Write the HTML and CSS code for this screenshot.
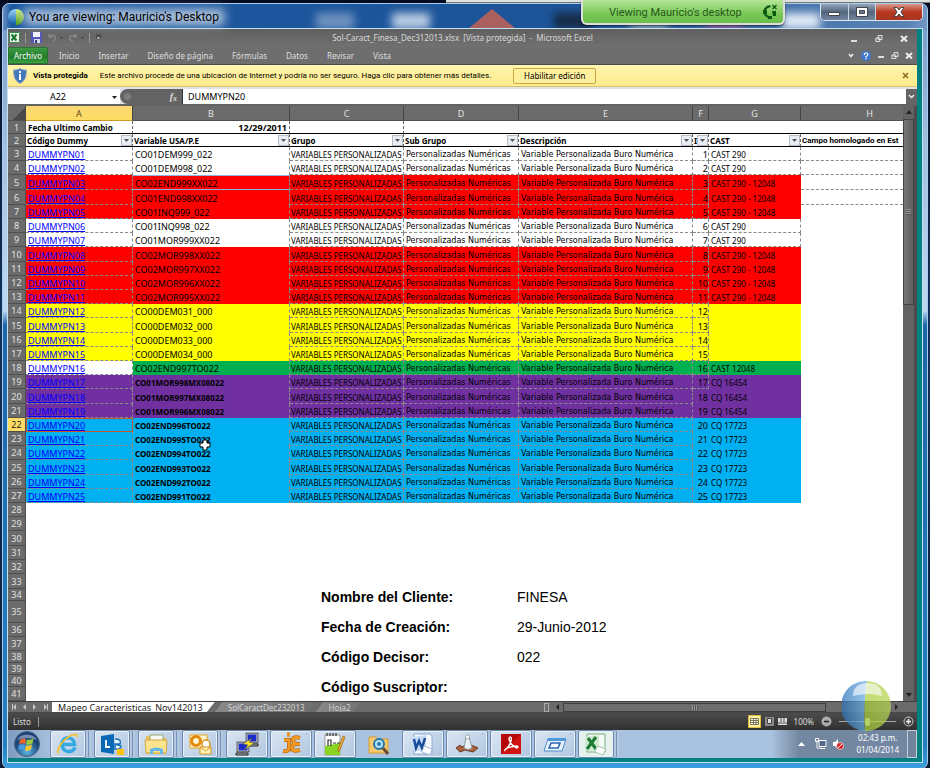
FILE: index.html
```html
<!DOCTYPE html>
<html lang="es">
<head>
<meta charset="utf-8">
<title>Mauricio's Desktop</title>
<link rel="stylesheet" href="styles.css">
</head>
<body>
<div class="meeting">
  <div class="meeting-edge"></div>
  <div class="meeting-pill">
    <span>Viewing Mauricio's desktop</span>
    <svg width="18" height="16" viewBox="0 0 18 16"><path d="M9.500 2.500A5.200 5.200 0 1 0 8 13" fill="none" stroke="#0b5c12" stroke-width="2.200"/><path d="M2 6h4v4H2zM7 12h4v3H7zM11 7h4v5h-3z" fill="#0b5c12"/><path d="M11.500 1l4 4m0-4l-4 4" stroke="#0b5c12" stroke-width="1.300"/></svg>
  </div>
</div>

<div class="viewer">
  <header class="viewer-bar">
    <svg class="viewer-logo" width="16" height="16" viewBox="0 0 16 16"><defs><linearGradient id="blue" x2="0" y2="1"><stop stop-color="#9fd4f5"/><stop offset="1" stop-color="#0a5aa8"/></linearGradient><linearGradient id="green" x2="0" y2="1"><stop stop-color="#d2ee7c"/><stop offset="1" stop-color="#4f9a10"/></linearGradient></defs><path d="M8 0a8 8 0 0 0 0 16z" fill="url(#blue)"/><path d="M8 0a8 8 0 0 1 0 16z" fill="url(#green)"/></svg>
    <h1>You are viewing: Mauricio's Desktop</h1>
    <div class="blurred" aria-hidden="true"><i class="b1"></i><i class="b2"></i><i class="b3"></i><i class="b4"></i><i class="b5"></i><i class="b6"></i><i class="b7"></i></div>
    <div class="caption-buttons">
      <button aria-label="Minimize"><svg width="12" height="10" viewBox="0 0 12 10"><path d="M.5 5.500h11v3H.5z" fill="#fff" stroke="#444"/></svg></button>
      <button aria-label="Maximize"><svg width="12" height="10" viewBox="0 0 12 10"><path d="M.5.5h11v9H.5z" fill="#fff" stroke="#444"/><path d="M3.500 3.500h5v3h-5z" fill="#6d7c90" stroke="#444"/></svg></button>
      <button class="close" aria-label="Close"><svg width="12" height="10" viewBox="0 0 12 10"><path d="M1 .5h3l2 2.500 2-2.500h3L8 5l3 4.500H8L6 7 4 9.500H1L4 5z" fill="#fff" stroke="#444"/></svg></button>
    </div>
  </header>

  <main class="desktop">
    <section class="excel">
      <div class="excel-title">
        <div class="qat">
          <svg width="11" height="11" viewBox="0 0 11 11"><path d="M0 0h11v11H0z" fill="#e9f3ea"/><path d="M.5.5h10v10H.5z" fill="none" stroke="#3b8b47"/><path d="M2.500 2.500l5 6m0-6l-5 6" stroke="#16762b" stroke-width="2"/></svg>
          <i class="sep"></i>
          <svg width="11" height="11" viewBox="0 0 11 11"><path d="M0 0h11v11H0z" fill="#5357b8"/><path d="M2 0h7v5H2z" fill="#f2f4ff"/><path d="M3 7h6v4H3z" fill="#d5d8ef"/><path d="M4 8h2v3H4z" fill="#333a88"/></svg>
          <svg width="16" height="10" viewBox="0 0 16 10"><path d="M2 1v3h3M2 4c2-3 7-2 6 2L6 9" fill="none" stroke="#858585" stroke-width="1.500"/><path d="M13 4h3l-1.500 2z" fill="#444"/></svg>
          <svg width="16" height="10" viewBox="0 0 16 10"><path d="M8 1v3H5M8 4C6 1 1 2 2 6l3 3" fill="none" stroke="#858585" stroke-width="1.500"/><path d="M13 4h3l-1.500 2z" fill="#444"/></svg>
          <i class="sep"></i>
          <svg width="7" height="7" viewBox="0 0 7 7"><path d="M1 1h5M1 3h5L3.500 6z" fill="#ddd" stroke="#222" stroke-width=".7"/></svg>
        </div>
        <span class="doc-name">Sol-Caract_Finesa_Dec312013.xlsx&nbsp; [Vista protegida]&nbsp; - &nbsp;Microsoft Excel</span>
        <div class="win-icons outer">
          <svg width="8" height="9"><path d="M1 6h6v2H1z" fill="#ddd"/></svg>
          <svg width="8" height="9"><path d="M3 1.500h4v4H3zM.8 4h4v3.500h-4z" fill="#777" stroke="#ddd"/></svg>
          <svg width="8" height="9"><path d="M1 2l6 5.500M7 2L1 7.500" stroke="#eee" stroke-width="2"/></svg>
        </div>
      </div>
      <nav class="ribbon">
        <button class="file">Archivo</button>
        <button>Inicio</button><button>Insertar</button><button>Diseño de página</button><button>Fórmulas</button><button>Datos</button><button>Revisar</button><button>Vista</button>
        <div class="win-icons">
          <svg width="8" height="9"><path d="M2 3l2 2.500L6 3" fill="none" stroke="#eee" stroke-width="1.500"/></svg>
          <svg width="10" height="10"><circle cx="5" cy="5" r="5" fill="#3f78cf"/><path d="M3.300 4q0-2 1.800-2t1.700 1.500T5 5.500v1M5 7v1.300" fill="none" stroke="#fff" stroke-width="1.200"/></svg>
          <svg width="8" height="9"><path d="M1 5h6v2H1z" fill="#ddd"/></svg>
          <svg width="8" height="9"><path d="M3 1.500h4v4H3zM.8 4h4v3.500h-4z" fill="#777" stroke="#ddd"/></svg>
          <svg width="8" height="9"><path d="M1 2l6 5.500M7 2L1 7.500" stroke="#eee" stroke-width="2"/></svg>
        </div>
      </nav>
      <div class="protected">
        <svg width="14" height="16" viewBox="0 0 14 16"><path d="M7 .5C5 2 3 2 .7 2 .5 9 2 13 7 15.500 12 13 13.500 9 13.300 2 11 2 9 2 7 .5z" fill="#4478b8" stroke="#8ea9c9"/><path d="M6 6h2v6H6zM6 3h2v2H6z" fill="#fff"/></svg>
        <strong>Vista protegida</strong>
        <span class="warning">Este archivo procede de una ubicación de Internet y podría no ser seguro. Haga clic para obtener más detalles.</span>
        <button class="enable">Habilitar edición</button>
        <button class="dismiss" aria-label="Cerrar"><svg width="7" height="7"><path d="M1 1l5 5M6 1L1 6" stroke="#8a6f20" stroke-width="1.600"/></svg></button>
      </div>
      <div class="formula-bar">
        <select class="name-box" aria-label="Cuadro de nombres"><option>A22</option></select>
        <svg class="name-arrow" width="7" height="5"><path d="M1 1h5L3.500 4z" fill="#222"/></svg>
        <div class="fx"><i></i><em>f<sub>x</sub></em></div>
        <input class="formula" aria-label="Barra de fórmulas" value="DUMMYPN20">
        <button class="expand" aria-label="Expandir"><svg width="7" height="5"><path d="M1 1l2.500 2.500L6 1" fill="none" stroke="#eee" stroke-width="1.500"/></svg></button>
      </div>
      <div class="workbook">
        <div class="sheet">
          <table class="cells">
            <colgroup><col class="c-n"><col class="c-a"><col class="c-b"><col class="c-c"><col class="c-d"><col class="c-e"><col class="c-f"><col class="c-g"><col></colgroup>
            <thead><tr><th class="corner"></th><th class="current">A</th><th>B</th><th>C</th><th>D</th><th>E</th><th>F</th><th>G</th><th class="h-col">H</th></tr></thead>
            <tbody id="rows"></tbody>
          </table>
          <dl class="details">
            <dt>Nombre del Cliente:</dt><dd>FINESA</dd>
            <dt>Fecha de Creación:</dt><dd>29-Junio-2012</dd>
            <dt>Código Decisor:</dt><dd>022</dd>
            <dt>Código Suscriptor:</dt><dd></dd>
          </dl>
          <svg class="pointer" width="12" height="12" viewBox="0 0 12 12"><path d="M4 1h4v3h3v4H8v3H4V8H1V4h3z" fill="#fff" stroke="#000"/></svg>
        </div>
        <div class="v-scroll">
          <svg width="8" height="7"><path d="M4 2l3 4H1z" fill="#222"/></svg>
          <div class="v-thumb"><i></i></div>
          <svg class="down" width="8" height="7"><path d="M4 5l3-4H1z" fill="#222"/></svg>
        </div>
      </div>
      <div class="sheet-tabs">
        <svg class="tab-nav" width="44" height="11" viewBox="0 0 44 11"><path d="M8 2v6L5 5zM18 2v6l-3-3zM25 2v6l3-3zM36 2v6l3-3zM4 2h1v6H4zM39 2h1v6h-1z" fill="#c6c6c6"/></svg>
        <button class="active">Mapeo Caracteristicas_Nov142013</button>
        <button>SolCaractDec232013</button>
        <button>Hoja2</button>
        <div class="h-scroll">
          <i class="split"></i>
          <svg width="7" height="8"><path d="M5 1v6L2 4z" fill="#222"/></svg>
          <div class="h-thumb"><i></i></div>
          <svg class="right" width="7" height="8"><path d="M2 1v6l3-3z" fill="#222"/></svg>
        </div>
      </div>
      <footer class="status">
        <span>Listo</span><i class="sep"></i>
        <div class="views">
          <svg width="13" height="13"><path d="M.5.5h12v12H.5z" fill="#fff3a8" stroke="#e3bd3b"/><path d="M2.500 3.500h8v6h-8zM2.500 5.500h8M2.500 7.500h8M5.500 3.500v6M8 3.500v6" fill="#fff" stroke="#665b30" stroke-width=".8"/></svg>
          <svg width="9" height="9"><path d="M0 0h9v9H0z" fill="#8a8a8a"/><path d="M2.500 1.500h4v5h-4z" fill="#ddd" stroke="#444"/></svg>
          <svg width="9" height="9"><path d="M0 1h9v7H0z" fill="#ddd"/><path d="M3 1v4M6 1v4M0 6h9" stroke="#555"/></svg>
        </div>
        <span class="percent">100%</span>
        <svg width="11" height="11"><circle cx="5.500" cy="5.500" r="5" fill="#aaa"/><path d="M3 5.500h5" stroke="#222" stroke-width="1.500"/></svg>
        <input class="zoom" type="range" aria-label="Zoom">
        <svg width="11" height="11"><circle cx="5.500" cy="5.500" r="4.500" fill="#444" stroke="#ccc"/><path d="M3 5.500h5M5.500 3v5" stroke="#eee" stroke-width="1.500"/></svg>
      </footer>
    </section>

    <footer class="taskbar">
      <button class="start" aria-label="Inicio"><svg width="26" height="26" viewBox="0 0 26 26"><defs><radialGradient id="orb" cy=".8"><stop stop-color="#5bb8e8"/><stop offset="1" stop-color="#1b4578"/></radialGradient></defs><circle cx="13" cy="13" r="12.500" fill="url(#orb)" stroke="#46617f"/><path d="M6 9q3-2.500 6-1l-1 5q-3-1.500-6 0z" fill="#f0642c"/><path d="M13 8.500q3 1 6.500-1l-1 5q-3 2-6.500 1z" fill="#9ac93b"/><path d="M5 14q3-1.500 6 0l-1 5q-3-1.500-5.500.500z" fill="#4b9be0"/><path d="M12 14.500q3 1 6-1l-1 5q-3 2-6 1z" fill="#fbc72e"/><path d="M3 9a11 9 0 0 1 20 0Q13 5 3 9z" fill="#fff" opacity=".4"/></svg></button>
      <button class="app stacked" aria-label="Internet Explorer"><svg width="26" height="24" viewBox="0 0 26 24"><path d="M20 15.500c-3 6.500-13 5-13-3.500S19 4 19.500 12.500H8" fill="none" stroke="#35a9e1" stroke-width="3.500"/><path d="M4 21C0 20 7 7 17 3q6-2 5 2" fill="none" stroke="#f3c22b" stroke-width="1.800"/></svg></button>
      <button class="app stacked" aria-label="Lync"><svg width="26" height="24" viewBox="0 0 26 24"><path d="M2 4l13-2v20L2 20z" fill="#0a68b5"/><path d="M7 8v7h4" fill="none" stroke="#fff" stroke-width="1.800"/><path d="M16 7q7 0 5 5h-5M16 17v-5l6 2q0 4-6 3z" fill="#eef7fd" stroke="#1571bd" stroke-width="1.500"/><path d="M18 17h7v6h-7z" fill="#ffc20e"/></svg></button>
      <button class="app stacked" aria-label="Explorador"><svg width="26" height="24" viewBox="0 0 26 24"><path d="M3 4h8l2 2h10v16H3z" fill="#e9bf5a"/><path d="M7 3h13v6H7z" fill="#f7faf3" stroke="#9aa86b"/><path d="M2 8h22l-1 13H3z" fill="#fbe28d" stroke="#d3a84a"/><path d="M7 22v-5q6-3 13 0v5h-3v-3h-7v3z" fill="#65b7e6"/></svg></button>
      <button class="app stacked" aria-label="Outlook"><svg width="26" height="24" viewBox="0 0 26 24"><path d="M3 3h17v13H3z" fill="#fff4d4" stroke="#e6a51b"/><circle cx="9" cy="9" r="4.500" fill="none" stroke="#e38a0c" stroke-width="3"/><circle cx="19" cy="12" r="4" fill="#fff" stroke="#d8941c" stroke-width="1.500"/><path d="M13 15h11v7H13z" fill="#fff3bc" stroke="#d8941c"/><path d="M13 15l5.500 4 5.500-4" fill="none" stroke="#d8941c"/></svg></button>
      <button class="app" aria-label="PuTTY"><svg width="26" height="24" viewBox="0 0 26 24"><path d="M13 2h10v8H13zM4 11h10v8H4z" fill="#1b2bc8" stroke="#222" stroke-width="2.600"/><path d="M13 2h10v8H13zM4 11h10v8H4z" fill="#1b2bc8" stroke="#ccc" stroke-width="1.200"/><path d="M15 12h9v2h-9zM2 21h12v2H2z" fill="#bbb" stroke="#222"/><path d="M18 6l-9 6 5 1-4 5 10-7-5-1z" fill="#ffe91f" stroke="#555" stroke-width=".6"/></svg></button>
      <button class="app" aria-label="jEdit"><svg width="26" height="24" viewBox="0 0 26 24"><path d="M6 8h5v8q0 4-6 3M9 2.500h3M22 6q-7-2-7 2 0 3 4 4-5 0-5 4 0 4 8 2M15 12h7" fill="none" stroke="#b96b17" stroke-width="4"/><path d="M6 8h5v8q0 4-6 3M9 2.500h3M22 6q-7-2-7 2 0 3 4 4-5 0-5 4 0 4 8 2M15 12h7" fill="none" stroke="#f59a22" stroke-width="2.600"/></svg></button>
      <button class="app" aria-label="Notepad++"><svg width="26" height="24" viewBox="0 0 26 24"><path d="M3 3h15v20H3z" fill="#fff" stroke="#999"/><path d="M3 14l15-3v12H3z" fill="#8bd321"/><path d="M5 1v3M8 1v3M11 1v3M14 1v3M6 14V8h3v6M11 11h3M15 11h3" stroke="#333" fill="none" stroke-width="1.200"/><path d="M21 4l2 1-5 13-2 2v-3z" fill="#f7a928" stroke="#8d651e" stroke-width=".7"/></svg></button>
      <button class="app plain" aria-label="Buscar"><svg width="26" height="24" viewBox="0 0 26 24"><path d="M3 5h7l2 2h10v14H3z" fill="#f6c96c" stroke="#d89c36"/><circle cx="13" cy="12" r="5" fill="#b9e3f7" stroke="#2679ad" stroke-width="2"/><circle cx="13" cy="12" r="2" fill="#2679ad"/><path d="M17 16l5 6" stroke="#694b35" stroke-width="3"/></svg></button>
      <button class="app" aria-label="Word"><svg width="26" height="24" viewBox="0 0 26 24"><path d="M4 2h16l2 2v18H4z" fill="#f5f9ff" stroke="#8caad7"/><path d="M2 5l14-2v17L2 18z" fill="#c6dbf5"/><path d="M4 7l2 9 3-7 3 7 3-10" fill="none" stroke="#1b4b9b" stroke-width="2.500"/><path d="M14 14l8 3-2 6-8-3z" fill="#fff" stroke="#aabbd5"/></svg></button>
      <button class="app" aria-label="Limpieza"><svg width="26" height="24" viewBox="0 0 26 24"><path d="M2 16l4-3 1 2q9-4 17 1l-5 4-8-2-5 2z" fill="#a8633d" stroke="#6a3b23"/><path d="M12 5h3l3 11q-4 3-8 0z" fill="#eef2f5" stroke="#8c99a4"/><circle cx="13.500" cy="5" r="2" fill="#fff" stroke="#9aa"/></svg></button>
      <button class="app" aria-label="Adobe Reader"><svg width="26" height="24" viewBox="0 0 26 24"><path d="M3 2h20v20H3z" fill="#b70808"/><path d="M3 22L23 2v20z" fill="#d01313"/><path d="M12 5q2 0 1 4-1 5-6 9 1-3 12-4 2 1 0 2-6-2-8-9 0-2 1-2z" fill="none" stroke="#fff" stroke-width="1.400"/></svg></button>
      <button class="app" aria-label="Ejecutar"><svg width="26" height="24" viewBox="0 0 26 24"><path d="M6 7h18l-4 12H2z" fill="#e9f3fd" stroke="#4c8ccc"/><path d="M6 6h18l-1 3H5z" fill="#4e98dc"/><path d="M9 11h9l-2 5H7z" fill="#fff" stroke="#2d67b3" stroke-width="1.600"/></svg></button>
      <button class="app stacked light" aria-label="Excel"><svg width="26" height="24" viewBox="0 0 26 24"><path d="M4 2h18v18H4z" fill="#f2faf3" stroke="#76ad7d"/><path d="M2 5l14-2v17L2 18z" fill="#d0ead2"/><path d="M5 6l8 11M13 5L4 17" stroke="#1f7d33" stroke-width="3"/><path d="M14 14l9 3-3 6-8-3z" fill="#fff" stroke="#a3c4a8"/></svg></button>
      <div class="tray">
        <svg width="7" height="5"><path d="M3.500 0L7 4H0z" fill="#fff"/></svg>
        <svg width="12" height="12" viewBox="0 0 12 12"><path d="M4 2.500h7v6H4zM5 10.500h5M2 2v8h3M.5.500h3v3h-3z" fill="#53688a" stroke="#fff"/></svg>
        <svg width="12" height="12" viewBox="0 0 12 12"><path d="M1 4h2l3-3v10L3 8H1z" fill="#fff"/><circle cx="8" cy="8" r="3.500" fill="#d92323" stroke="#fff" stroke-width=".6"/><path d="M6 10l4-4" stroke="#fff"/></svg>
        <time>02:43 p.m.<br>01/04/2014</time>
        <i class="show-desktop"></i>
      </div>
    </footer>
  </main>
  <svg class="share-orb" width="50" height="50" viewBox="0 0 50 50"><defs><linearGradient id="orb-b"><stop stop-color="#2a6fb5"/><stop offset="1" stop-color="#6fb4e8"/></linearGradient><linearGradient id="orb-g"><stop stop-color="#a9cf38"/><stop offset="1" stop-color="#b9d458"/></linearGradient></defs><path d="M25 0a25 25 0 0 0-2 50Q21 25 25 0z" fill="url(#orb-b)"/><path d="M25 0a25 25 0 0 1-2 50Q21 25 25 0z" fill="url(#orb-g)"/><path d="M11 15Q11 3 25 2t15 13q-14-4-29 0z" fill="#fff" opacity=".6"/></svg>
</div>
<script src="script.js"></script>
</body>
</html>
```
FILE: styles.css
```css
* { box-sizing: border-box; }
body {
  margin: 0; min-height: 100vh; display: flex;
  background: linear-gradient(#050b20, #103058 40%, #0b1b36);
  font: 8px/12px "Noto Sans", sans-serif; color: #000; overflow: hidden;
}
button, input, select { font: inherit; color: inherit; border: 0; padding: 0; background: none; border-radius: 0; }
svg { display: block; flex: none; }
i { flex: none; }

.meeting { position: absolute; top: 0; right: 0; width: 52%; z-index: 3; }
.meeting-edge { height: 3px; background: #dfe3e0; border-bottom: 1px solid #777; }
.meeting-pill {
  position: absolute; top: 0; right: 145px; width: 204px; height: 25px; padding: 4px 4px 0 26px;
  display: flex; justify-content: space-between; line-height: 18px; font-size: 11px;
  font-family: Roboto, sans-serif; color: #28581d; white-space: nowrap;
  background: linear-gradient(#b7e697, #79c857 60%, #6bbd4a);
  border: 2px solid #dcdedb; border-top: 0; border-radius: 0 0 6px 6px; box-shadow: 0 1px 2px #0009;
}

.viewer {
  position: relative; flex: 1; margin: 3px 2px 1px; padding: 0 1px 6px 5px; display: flex; flex-direction: column;
  border: 1px solid #a9cdec; border-radius: 7px;
  background: linear-gradient(90deg, #6c8fc0, #1d58a0 8px, #1d5499 60%, #5a83b4 98%, #7398c4);
}
.viewer::before { content: ""; position: absolute; inset: 26px 0 0; z-index: 0; background: linear-gradient(#7a9ecb, #a3bfdf 16%, #bcd8f2 38%, #1d66a8 40%, #2580c2 97%, #3d9ede); border-radius: 0 0 6px 6px; }
.viewer-bar { position: relative; display: flex; align-items: center; height: 25px; overflow: visible; }
.viewer-logo, .viewer-bar h1 { position: relative; z-index: 1; }
.viewer-bar h1 { margin: 0 0 0 5px; font: 12px/20px Roboto, sans-serif; white-space: nowrap; text-shadow: 0 0 8px #fff; }
.viewer-bar h1::before { content: ""; position: absolute; z-index: -1; inset: 1px -6px; background: #b4c9e0; filter: blur(5px); opacity: .75; }
.blurred { position: absolute; inset: 0 0 0 230px; display: flex; align-items: flex-end; gap: 38px; padding-left: 78px; overflow: hidden; }
.blurred i { width: 38px; height: 16px; filter: blur(4px); background: #6f93c0; }
.blurred .b2 { background: #b9cbe3; }
.blurred .b3 { width: 48px; height: 20px; clip-path: polygon(50% 0, 100% 100%, 0 100%); background: #a9605f; filter: none; }
.blurred .b4 { background: #152b46; }
.blurred .b5 { background: #97aec4; }
.blurred .b6 { background: #a05fa6; }
.blurred .b7 { background: #dfe9f5; }
.caption-buttons { position: absolute; right: 3px; top: 0; display: flex; width: 103px; height: 17px; border: 1px solid #dce4ee; border-top: 0; border-radius: 0 0 5px 5px; background: #465b78; overflow: hidden; z-index: 1; }
.caption-buttons button { flex: 1; display: grid; place-items: center; border-right: 1px solid #cdd6e0; background: linear-gradient(#96a7bb, #53657d 50%, #71869f); }
.caption-buttons .close { flex: 0 0 46px; border: 0; background: linear-gradient(#d99a8c, #b9371f 50%, #a63520); }

.desktop { position: relative; flex: 1; display: flex; flex-direction: column; margin-right: 4px; border-right: 5px solid #008080; border-bottom: 4px solid #008080; box-shadow: 0 0 0 1px #c5e2f3; background: #008080; }
.excel { flex: 1; display: flex; flex-direction: column; background: #6e6e6e; }
.excel-title { position: relative; height: 18px; display: flex; align-items: center; justify-content: center; color: #d9d9d9; background: linear-gradient(#5f5f5f, #717171); }
.qat { position: absolute; left: 1px; top: 3px; display: flex; align-items: center; gap: 5px; }
.sep { width: 1px; height: 10px; background: #9a9a9a; }
.doc-name { white-space: nowrap; }
.win-icons { display: flex; align-items: center; gap: 6px; margin-left: auto; padding-right: 4px; }
.win-icons.outer { position: absolute; right: 9px; gap: 17px; padding: 0; }
.ribbon { display: flex; height: 18px; color: #dedede; background: #6e6e6e; align-items: center; border-bottom: 1px solid #4b4b4b; gap: 19px; }
.ribbon > button { white-space: nowrap; }
.ribbon .file { align-self: stretch; width: 40px; margin-right: -8px; color: #fff; background: linear-gradient(#3e9b44, #1f7c2a 60%, #3da142); border-radius: 2px 2px 0 0; border: 1px solid #2b7230; }
.protected { display: flex; align-items: center; height: 22px; padding: 0 8px 0 5px; white-space: nowrap; background: linear-gradient(#fff4ae, #ffeb8c); border-bottom: 1px solid #d8c26c; }
.protected strong { margin: 0 12px 0 6px; font-family: Roboto, sans-serif; }
.warning { font-family: Roboto, sans-serif; }
.enable { width: 83px; height: 16px; margin-left: 22px; border: 1px solid #c9a84c; border-radius: 2px; background: #fff09d; }
.dismiss { margin-left: auto; }
.formula-bar { position: relative; display: flex; height: 19px; padding-top: 2px; border-bottom: 2px solid #626262; background: #dfe4ea; font-size: 9px; }
.name-box { appearance: none; width: 112px; background: #fff; text-align: center; text-align-last: center; padding-right: 12px; }
.name-arrow { position: absolute; left: 103px; top: 8px; }
.fx { width: 62px; display: flex; justify-content: space-between; align-items: center; padding: 0 5px 0 4px; color: #ddd; background: #636363; border-radius: 8px 0 0 8px; }
.fx i { width: 7px; height: 7px; border-radius: 50%; background: #7c7c7c; }
.fx em { font: italic bold 10px/12px "Liberation Serif", serif; }
.fx sub { font-size: 8px; line-height: 0; vertical-align: -1px; }
.formula { flex: 1; min-width: 0; padding: 0 5px; background: #fff; border-left: 1px solid #333; }
.expand { width: 11px; display: grid; place-items: center; background: #656565; }

.workbook { flex: 1; display: flex; background: #fff; }
.sheet { position: relative; flex: 1; min-width: 0; overflow: hidden; }
.cells { width: 100%; table-layout: fixed; border-collapse: separate; border-spacing: 0; line-height: 12px; white-space: nowrap; }
.c-n { width: 18px; } .c-a { width: 107px; } .c-b { width: 157px; } .c-c { width: 114px; } .c-d { width: 115px; } .c-e { width: 174px; } .c-f { width: 16px; } .c-g { width: 92px; }
.cells th, .cells td { padding: 0 2px; overflow: hidden; text-align: left; }
.cells thead th { height: 15px; padding: 2px 0 0; text-align: center; font-size: 9px; font-weight: 400; color: #e2e2e2; background: #6b6b6b; border-right: 1px solid #454545; border-bottom: 1px solid #505050; }
.cells thead .h-col { border-right: 0; padding-left: 35px; }
.cells thead .current { background: linear-gradient(#f9d872, #ffdc63); color: #5d4b1a; border-bottom-color: #c79b2a; }
.cells thead .corner { background: linear-gradient(135deg, #6b6b6b 60%, #4a4a4a 60%); }
.cells tbody th { padding: 0; line-height: 11px; text-align: center; font-size: 9px; font-weight: 400; color: #e2e2e2; background: #6b6b6b; border-right: 1px solid #505050; border-bottom: 1px solid #4f4f4f; }
.cells tbody .current { background: #ffdc63; color: #222; }
tr.h12 { height: 12px; } tr.h13 { height: 13px; } tr.h14 { height: 14px; } tr.h15 { height: 15px; } tr.h22 { height: 22px; }
.cells td { border: 0 dashed #8a8a8a; line-height: 11px; }
.cells .data td { border-right-width: 1px; border-bottom-width: 1px; vertical-align: bottom; line-height: 10px; }
.cells .data .b { border-bottom: 0; padding-bottom: 1px; font-size: 9px; }
.data .a { font-size: 9px; }
.data .d, .data .e { font-family: "DejaVu Sans", sans-serif; }
.cells .data .c { padding-left: 1px; }
.cells .data .f { text-align: right; font-size: 9px; padding: 0; }
.cells .data .g, .cells .data .h { border-width: 0; padding-bottom: 1px; }
.cells .white .g { border-width: 0 1px 1px 0; padding-bottom: 0; }
.cells .lined .h { border-bottom-width: 1px; }
.cells .bold-code .b { font-size: 8px; font-weight: 700; }
.cells .open-f .f { border-width: 0; padding: 0 1px 1px 0; }
.red td:not(.h) { background: #f00; } .yellow td:not(.h) { background: #ff0; } .green td:not(.h) { background: #00b050; } .green td.a { background: #fff; }
.purple td:not(.h) { background: #7030a0; } .cyan td:not(.h) { background: #00b0f0; }
.edited .b { box-shadow: inset 0 1px #8db4e2, inset 0 -1px #8db4e2; }
.data a { color: #00f; text-decoration: underline; }
.selected .a { outline: 1px solid #c5582a; outline-offset: -1px; }
.cells .head td { font-weight: 700; border-bottom: 1px solid #000; }
.cells .first .a, .cells .first .b, .cells .first .c { border-right: 1px dashed #666; }
.cells .first .b { text-align: right; font-size: 9px; }
.cells .names td { border-right: 1px dashed #666; padding-left: 1px; }
.cells .names .h { border-right: 0; padding-right: 0; font-family: Roboto, sans-serif; }
.cell-head { display: flex; justify-content: space-between; align-items: center; }
.cell-head span { overflow: hidden; }
.filter { width: 11px; height: 11px; flex: none; display: grid; place-items: center; margin-right: -2px; background: #e9eef4; border: 1px solid #b5bcc6; }

.details { position: absolute; left: 313px; top: 476px; margin: 0; display: grid; grid-template-columns: 196px auto; grid-auto-rows: 30px; align-items: center; font: 14px/16px "Liberation Sans", sans-serif; }
.details dt { font-weight: 700; }
.details dd { margin: 0; }
.pointer { position: absolute; left: 191px; top: 333px; }

.v-scroll { width: 14px; padding-top: 2px; display: flex; flex-direction: column; align-items: center; background: #636363; border-right: 3px solid #4b4b4b; }
.v-thumb { width: 11px; height: 186px; margin-top: 4px; display: grid; place-items: center; background: linear-gradient(90deg, #777, #5e5e5e); border: 1px solid #444; }
.v-thumb i { width: 5px; height: 6px; background: repeating-linear-gradient(#999 0 1px, #555 1px 2px); }
.down { margin-top: auto; margin-bottom: 2px; }

.sheet-tabs { display: flex; height: 12px; background: #6b6b6b; border-top: 1px solid #3f3f3f; border-bottom: 1px solid #474747; font-size: 9px; line-height: 11px; }
.sheet-tabs button { color: #d4d4d4; padding: 0 11px 0 13px; white-space: nowrap; background: linear-gradient(120deg, #8b8b8b, #6e6e6e); clip-path: polygon(8px 0, 100% 0, calc(100% - 8px) 100%, 0 100%); font-size: 8px; }
.sheet-tabs .active { color: #222; background: #fff; padding: 0 12px 0 6px; clip-path: polygon(0 0, 100% 0, calc(100% - 8px) 100%, 0 100%); font-size: 9px; }
.h-scroll { display: flex; align-items: center; width: 373px; margin-left: auto; }
.split { width: 5px; height: 9px; border: 1px solid #aaa; margin: 0 5px 0 0; }
.h-thumb { flex: 0 0 263px; height: 9px; margin-left: 2px; display: grid; place-items: center; background: #6d6d6d; border: 1px solid #3f3f3f; }
.h-thumb i { width: 6px; height: 5px; background: repeating-linear-gradient(90deg, #999 0 1px, #555 1px 2px); }
.right { margin: 0 17px 0 auto; }
.status { display: flex; height: 17px; align-items: center; gap: 7px; padding: 0 3px 0 5px; color: #ddd; background: linear-gradient(#4c4c4c, #303030); }
.views { display: flex; align-items: center; gap: 4px; margin-left: auto; }
.zoom { appearance: none; width: 57px; margin: 0; height: 9px; background: linear-gradient(#aaa, #aaa) center/100% 1px no-repeat; }
.zoom::-webkit-slider-thumb { appearance: none; width: 5px; height: 8px; background: #d0d0d0; border-radius: 1px 1px 3px 3px; }

.taskbar { display: flex; height: 28px; padding-left: 6px; background: linear-gradient(90deg, #7f9bc0, #a9c2df 5%, #a9c2df 84%, #7487a0 87%, #7387a3); }
.start { width: 26px; margin-right: 10px; display: grid; place-items: center; }
.app { position: relative; width: 42px; margin-right: 2px; display: grid; place-items: center; border: 1px solid #6d89ad; border-radius: 2px; background: linear-gradient(135deg, #d9e5f2, #b1c7e0); box-shadow: inset 0 0 0 1px #e7f0f9; }
.app.stacked { width: 36px; margin-right: 8px; box-shadow: inset 0 0 0 1px #e7f0f9, 2px 0 #b4c9e1, 3px 0 #7592b5, 5px 0 #b4c9e1; }
.app.plain { border-color: transparent; background: none; box-shadow: none; }
.app.light { background: #e7f1ee; }
.tray { display: flex; align-items: center; gap: 10px; margin-left: auto; color: #fff; text-align: center; }
.tray svg:nth-child(3) { margin-left: -5px; margin-right: 2px; }
.tray time { white-space: nowrap; }
.show-desktop { width: 10px; align-self: stretch; margin-left: -2px; border: 1px solid #c3d0dd; background: #71849c; }
.share-orb { position: absolute; right: 35px; bottom: 37px; opacity: .72; z-index: 2; }
```
FILE: script.js
```js
// number, height, style classes, variable, CAST text
const data = [
  [3, 14, 'white lined', 'CO01DEM999_022', 'CAST 290'],
  [4, 14, 'white lined', 'CO01DEM998_022', 'CAST 290'],
  [5, 15, 'red lined edited', 'CO02END999XX022', 'CAST 290 - 12048'],
  [6, 15, 'red lined', 'CO01END998XX022', 'CAST 290 - 12048'],
  [7, 14, 'red', 'CO01INQ999_022', 'CAST 290 - 12048'],
  [8, 14, 'white', 'CO01INQ998_022', 'CAST 290'],
  [9, 14, 'white', 'CO01MOR999XX022', 'CAST 290'],
  [10, 15, 'red', 'CO02MOR998XX022', 'CAST 290 - 12048'],
  [11, 14, 'red', 'CO02MOR997XX022', 'CAST 290 - 12048'],
  [12, 14, 'red', 'CO02MOR996XX022', 'CAST 290 - 12048'],
  [13, 14, 'red', 'CO02MOR995XX022', 'CAST 290 - 12048'],
  [14, 14, 'yellow', 'CO00DEM031_000', ''],
  [15, 15, 'yellow', 'CO00DEM032_000', ''],
  [16, 14, 'yellow', 'CO00DEM033_000', ''],
  [17, 14, 'yellow', 'CO00DEM034_000', ''],
  [18, 14, 'green', 'CO02END997TO022', 'CAST 12048'],
  [19, 14, 'purple bold-code', 'CO01MOR998MX08022', 'CQ 16454'],
  [20, 15, 'purple bold-code open-f', 'CO01MOR997MX08022', 'CQ 16454'],
  [21, 14, 'purple bold-code open-f', 'CO01MOR996MX08022', 'CQ 16454'],
  [22, 14, 'cyan bold-code open-f selected', 'CO02END996TO022', 'CQ 17723'],
  [23, 14, 'cyan bold-code open-f', 'CO02END995TO022', 'CQ 17723'],
  [24, 14, 'cyan bold-code open-f', 'CO02END994TO022', 'CQ 17723'],
  [25, 15, 'cyan bold-code open-f', 'CO02END993TO022', 'CQ 17723'],
  [26, 14, 'cyan bold-code open-f', 'CO02END992TO022', 'CQ 17723'],
  [27, 14, 'cyan bold-code open-f', 'CO02END991TO022', 'CQ 17723']
];
const emptyHeights = [14, 14, 15, 14, 14, 15, 12, 22, 14, 14, 12, 12, 12, 14];
const cells = values => values.map((v, i) => `<td class="${'abcdefgh'[i]}">${v}</td>`).join('');
const filter = name => `<div class="cell-head"><span>${name}</span><button class="filter" aria-label="Filtrar"><svg width="5" height="3"><path d="M0 0h5L2.500 3z" fill="#555"/></svg></button></div>`;

let html = `<tr class="head first h13"><th>1</th>${cells(['Fecha Ultimo Cambio', '12/29/2011', '', '', '', '', '', ''])}</tr>`;
html += `<tr class="head names h13"><th>2</th>${cells([...['Código Dummy', 'Variable USA/P.E', 'Grupo', 'Sub Grupo', 'Descripción', 'I', 'CAST'].map(filter), 'Campo homologado en Est'])}</tr>`;
data.forEach(([n, h, style, code, cast], i) => {
  const id = String(i + 1).padStart(2, '0');
  const current = n === 22 ? ' class="current"' : '';
  html += `<tr class="data ${style} h${h}"><th${current}>${n}</th>${cells([`<a href="#">DUMMYPN${id}</a>`, code, 'VARIABLES PERSONALIZADAS', 'Personalizadas Numéricas', 'Variable Personalizada Buro Numérica', i + 1, cast, ''])}</tr>`;
});
emptyHeights.forEach((h, i) => {
  html += `<tr class="h${h}"><th>${28 + i}</th><td colspan="8"></td></tr>`;
});
document.getElementById('rows').innerHTML = html;
```
